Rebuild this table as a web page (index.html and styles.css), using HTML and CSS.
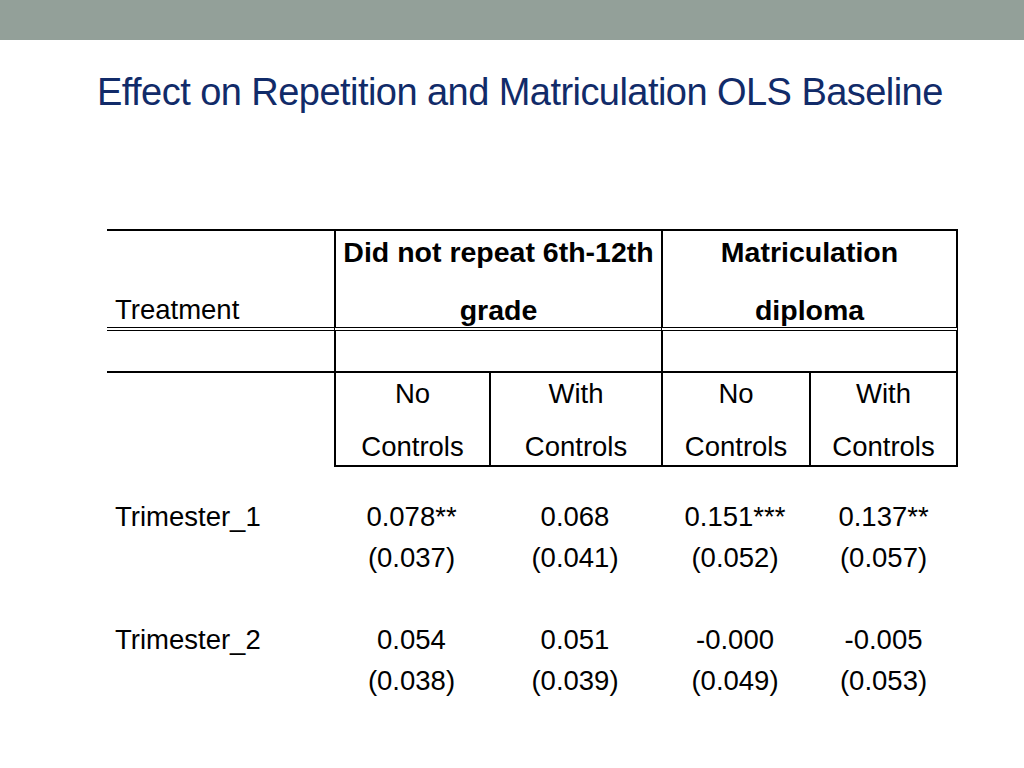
FILE: index.html
```html
<!DOCTYPE html>
<html lang="en">
<head>
<meta charset="utf-8">
<title>Effect on Repetition and Matriculation OLS Baseline</title>
<link rel="stylesheet" href="styles.css">
</head>
<body>
<div class="topbar"></div>
<h1 class="title">Effect on Repetition and Matriculation OLS Baseline</h1>
<table class="results">
  <colgroup>
    <col class="c-label">
    <col class="c1">
    <col class="c2">
    <col class="c3">
    <col class="c4">
  </colgroup>
  <thead>
    <tr class="head">
      <th class="label-head">Treatment</th>
      <th class="group first" colspan="2">
        <div class="hline">Did not repeat 6th-12th</div>
        <div class="hline second">grade</div>
      </th>
      <th class="group last" colspan="2">
        <div class="hline">Matriculation</div>
        <div class="hline second">diploma</div>
      </th>
    </tr>
    <tr class="empty">
      <td class="label-empty"><div class="spacer"></div></td>
      <td class="group first" colspan="2"><div class="spacer"></div></td>
      <td class="group last" colspan="2"><div class="spacer"></div></td>
    </tr>
    <tr class="sub">
      <td class="label-sub"></td>
      <td class="subcell"><div class="sline">No</div><div class="sline second">Controls</div></td>
      <td class="subcell"><div class="sline">With</div><div class="sline second">Controls</div></td>
      <td class="subcell"><div class="sline">No</div><div class="sline second">Controls</div></td>
      <td class="subcell end"><div class="sline">With</div><div class="sline second">Controls</div></td>
    </tr>
  </thead>
  <tbody>
    <tr class="coef first-block">
      <td class="rowlabel">Trimester_1</td>
      <td>0.078**</td>
      <td>0.068</td>
      <td>0.151***</td>
      <td>0.137**</td>
    </tr>
    <tr class="se">
      <td class="rowlabel"></td>
      <td>(0.037)</td>
      <td>(0.041)</td>
      <td>(0.052)</td>
      <td>(0.057)</td>
    </tr>
    <tr class="coef next-block">
      <td class="rowlabel">Trimester_2</td>
      <td>0.054</td>
      <td>0.051</td>
      <td>-0.000</td>
      <td>-0.005</td>
    </tr>
    <tr class="se">
      <td class="rowlabel"></td>
      <td>(0.038)</td>
      <td>(0.039)</td>
      <td>(0.049)</td>
      <td>(0.053)</td>
    </tr>
  </tbody>
</table>
</body>
</html>
```
FILE: styles.css
```css
html, body {
  margin: 0;
  padding: 0;
  background: #ffffff;
}

body {
  width: 1024px;
  height: 768px;
  overflow: hidden;
  font-family: "Liberation Sans", Arial, Helvetica, sans-serif;
  color: #000000;
}

.topbar {
  height: 40px;
  background: #93a099;
}

.title {
  margin: 30px 0 0 0;
  padding-left: 97px;
  font-size: 38px;
  line-height: 44px;
  font-weight: normal;
  letter-spacing: -0.55px;
  color: #112b69;
  white-space: nowrap;
}

.results {
  margin: 115px 0 0 107px;
  border-collapse: separate;
  border-spacing: 0;
  table-layout: fixed;
  width: 851px;
  font-size: 27.5px;
}

.c-label { width: 227px; }
.c1 { width: 155px; }
.c2 { width: 172px; }
.c3 { width: 148px; }
.c4 { width: 149px; }

.results th,
.results td {
  padding: 0;
  text-align: center;
  white-space: nowrap;
  vertical-align: top;
}

/* header row */
.head th {
  border-top: 2px solid #000;
  border-bottom: 4px double #000;
  font-weight: bold;
  font-size: 28.5px;
  padding: 5px 0 1px 0;
}

.head .label-head {
  font-weight: normal;
  font-size: 27.5px;
  text-align: left;
  vertical-align: bottom;
  padding-left: 8px;
  line-height: 32px;
}

.hline {
  line-height: 32px;
}

.hline.second {
  margin-top: 26px;
}

.group.first {
  border-left: 2px solid #000;
}

.group.last {
  border-left: 2px solid #000;
  border-right: 2px solid #000;
}

/* empty row */
.empty td {
  border-bottom: 2px solid #000;
}

.spacer {
  height: 40px;
}

/* sub header row */
.sub td {
  padding: 5px 0 2px 0;
}

.sub .subcell {
  border-left: 2px solid #000;
  border-bottom: 2px solid #000;
}

.sub .subcell.end {
  border-right: 2px solid #000;
}

.sline {
  line-height: 32px;
}

.sline.second {
  margin-top: 21px;
}

/* body rows */
.results tbody td {
  line-height: 41px;
}

.results tbody .rowlabel {
  text-align: left;
  padding-left: 8px;
}

.coef.first-block td {
  padding-top: 29px;
}

.coef.next-block td {
  padding-top: 41px;
}
```
